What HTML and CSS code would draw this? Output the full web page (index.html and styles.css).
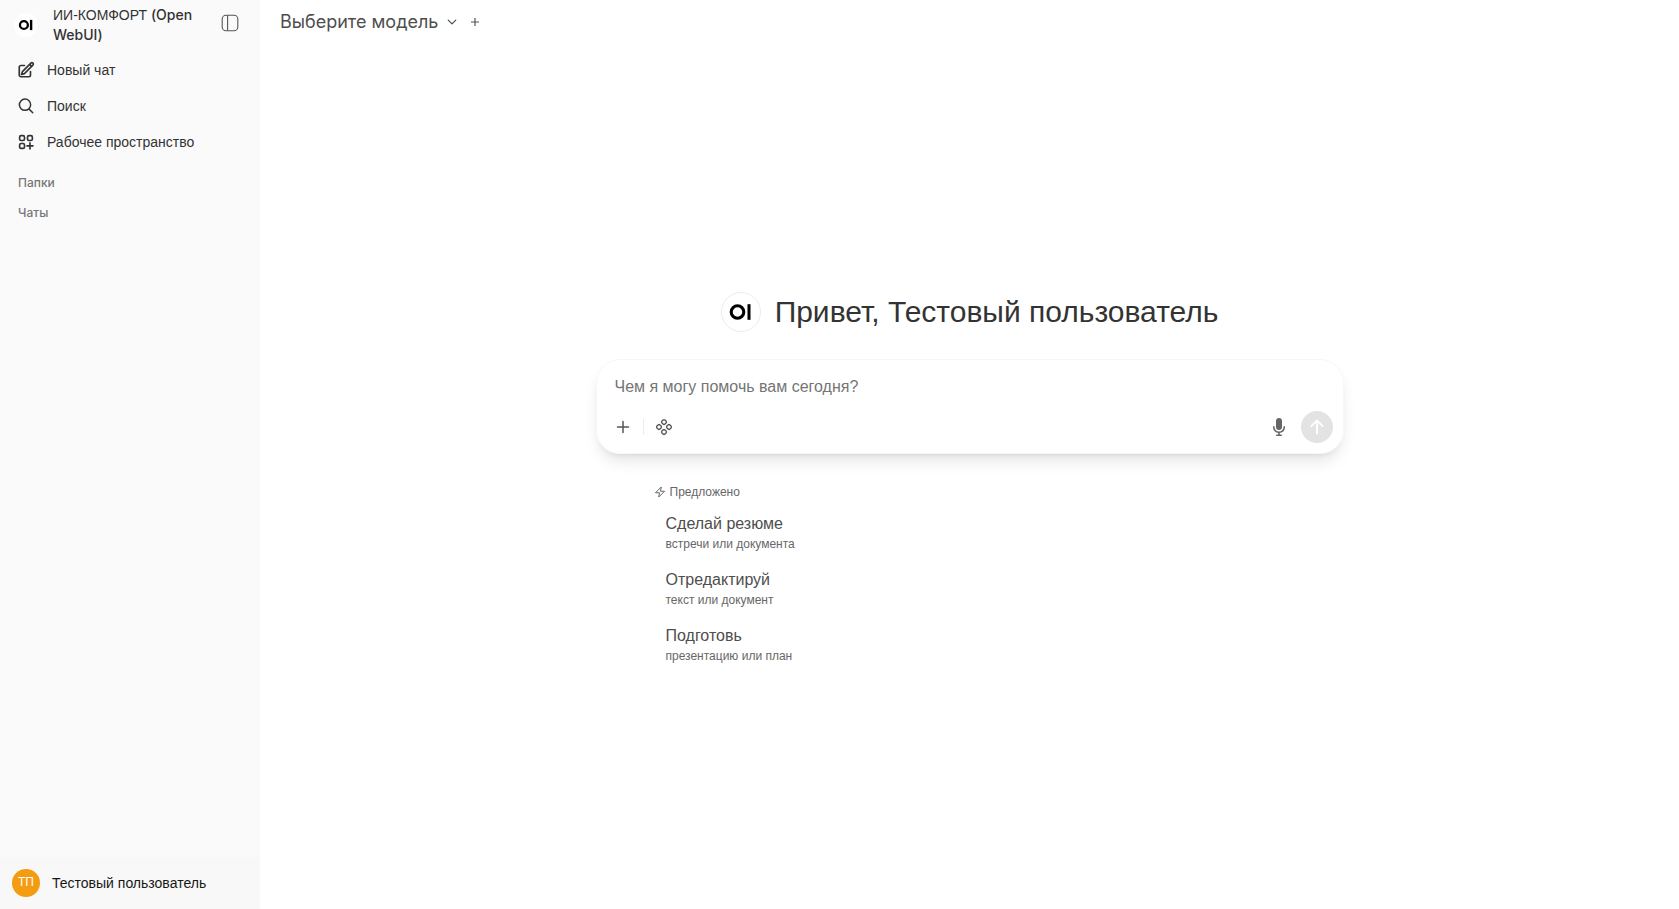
FILE: index.html
```
<!DOCTYPE html>
<html lang="ru">
	<head>
		<meta charset="utf-8">
		<title>ИИ-КОМФОРТ (Open WebUI)</title>
		<link rel="stylesheet" href="styles.css">
	</head>
	<body>
		<nav class="sidebar">
			<div class="sidebar-top">
				<svg class="brand-logo" viewBox="0 0 40 40">
					<circle cx="20" cy="20" r="20" fill="#fff"/>
					<circle cx="16.5" cy="20" r="6.6" fill="none" stroke="#000" stroke-width="3.8"/>
					<rect x="26.5" y="11.500" width="4" height="17" fill="#000"/>
				</svg>
				<div class="brand-name">ИИ-КОМФОРТ <span class="latin">(Open</span> <span class="latin">WebUI)</span></div>
				<button class="icon-btn toggle" aria-label="Боковая панель">
					<svg width="18" height="18" viewBox="0 0 18 18" fill="none" stroke="currentColor" stroke-width="1.1">
						<rect x="1.2" y="1.2" width="15.6" height="15.6" rx="3.8"/>
						<path d="M6.6 1.2v15.6"/>
					</svg>
				</button>
			</div>

			<a class="menu-item" href="#">
				<svg width="18" height="18" viewBox="0 0 24 24" fill="none" stroke="currentColor" stroke-width="2.2" stroke-linecap="round" stroke-linejoin="round">
					<path d="m16.862 4.487 1.687-1.688a1.875 1.875 0 1 1 2.652 2.652L10.582 16.07a4.5 4.5 0 0 1-1.897 1.13L6 18l.8-2.685a4.5 4.5 0 0 1 1.13-1.897l8.932-8.931Zm0 0L19.5 7.125M18 14v4.75A2.25 2.25 0 0 1 15.75 21H5.25A2.25 2.25 0 0 1 3 18.75V8.25A2.25 2.25 0 0 1 5.25 6H10"/>
				</svg>
				Новый чат
			</a>
			<a class="menu-item" href="#">
				<svg width="18" height="18" viewBox="0 0 24 24" fill="none" stroke="currentColor" stroke-width="2" stroke-linecap="round">
					<path d="m21 21-5.2-5.200m0 0A7.500 7.500 0 1 0 5.200 5.200a7.500 7.500 0 0 0 10.600 10.600Z"/>
				</svg>
				Поиск
			</a>
			<a class="menu-item" href="#">
				<svg width="18" height="18" viewBox="0 0 24 24" fill="none" stroke="currentColor" stroke-width="2.2" stroke-linecap="round">
					<rect x="3.5" y="3.5" width="6.5" height="6.5" rx="2"/>
					<rect x="14" y="3.5" width="6.5" height="6.5" rx="2"/>
					<rect x="3.5" y="14" width="6.5" height="6.5" rx="2"/>
					<path d="M17.3 13.2v8M13.3 17.2h8"/>
				</svg>
				Рабочее пространство
			</a>

			<div class="section-title first">Папки</div>
			<div class="section-title">Чаты</div>

			<button class="user">
				<span class="avatar">ТП</span>
				Тестовый пользователь
			</button>
		</nav>

		<main class="content">
			<header class="topbar">
				<button class="model">
					Выберите модель
					<svg width="12" height="12" viewBox="0 0 24 24" fill="none" stroke="currentColor" stroke-width="2.5" stroke-linecap="round" stroke-linejoin="round">
						<path d="m19.5 8.25-7.5 7.5-7.5-7.5"/>
					</svg>
				</button>
				<button class="icon-btn" aria-label="Добавить модель">
					<svg width="10" height="10" viewBox="0 0 10 10" fill="none" stroke="currentColor" stroke-width="1.2">
						<path d="M5 1v8M1 5h8"/>
					</svg>
				</button>
			</header>

			<div class="chat">
				<div class="greeting">
					<svg class="greeting-logo" viewBox="0 0 40 40">
						<circle cx="20" cy="20" r="19.5" fill="#fff" stroke="#ececec"/>
						<circle cx="16.5" cy="20" r="6.3" fill="none" stroke="#000" stroke-width="3.1"/>
						<rect x="26.5" y="12.2" width="3" height="15.6" fill="#000"/>
					</svg>
					<h1>Привет, Тестовый пользователь</h1>
				</div>

				<form class="composer">
					<input class="prompt" type="text" placeholder="Чем я могу помочь вам сегодня?" aria-label="Чем я могу помочь вам сегодня?">
					<div class="tools">
						<button class="icon-btn" type="button" aria-label="Ещё">
							<svg width="20" height="20" viewBox="0 0 20 20" fill="none" stroke="currentColor" stroke-width="1.5" stroke-linecap="round">
								<path d="M10 4.5v11M4.5 10h11"/>
							</svg>
						</button>
						<span class="divider"></span>
						<button class="icon-btn" type="button" aria-label="Интеграции">
							<svg width="18" height="18" viewBox="0 0 18 18" fill="none" stroke="currentColor" stroke-width="1.3">
								<rect x="6.9" y="1.9" width="4.2" height="4.2" rx="1.3" transform="rotate(45 9 4)"/>
								<rect x="1.9" y="6.9" width="4.2" height="4.2" rx="1.3" transform="rotate(45 4 9)"/>
								<rect x="11.9" y="6.9" width="4.2" height="4.2" rx="1.3" transform="rotate(45 14 9)"/>
								<rect x="6.9" y="11.9" width="4.2" height="4.2" rx="1.3" transform="rotate(45 9 14)"/>
							</svg>
						</button>
						<button class="icon-btn mic" type="button" aria-label="Диктовка">
							<svg width="20" height="20" viewBox="0 0 20 20" fill="currentColor">
								<path d="M7 4a3 3 0 0 1 6 0v6a3 3 0 1 1-6 0V4Z"/>
								<path d="M5.5 9.643a.75.75 0 0 0-1.5 0V10c0 3.06 2.29 5.585 5.25 5.954V17.5h-1.5a.75.75 0 0 0 0 1.5h4.5a.75.75 0 0 0 0-1.5h-1.5v-1.546A6.001 6.001 0 0 0 16 10v-.357a.75.75 0 0 0-1.5 0V10a4.5 4.5 0 0 1-9 0v-.357Z"/>
							</svg>
						</button>
						<button class="send" type="button" aria-label="Отправить">
							<svg width="20" height="20" viewBox="0 0 16 16" fill="currentColor">
								<path d="M8 14a.75.75 0 0 1-.75-.75V4.56L4.03 7.78a.75.75 0 0 1-1.06-1.06l4.5-4.5a.75.75 0 0 1 1.06 0l4.5 4.5a.75.75 0 0 1-1.06 1.06L8.75 4.56v8.69A.75.75 0 0 1 8 14Z"/>
							</svg>
						</button>
					</div>
				</form>

				<div class="suggestions">
					<div class="suggestions-title">
						<svg width="12" height="12" viewBox="0 0 24 24" fill="none" stroke="currentColor" stroke-width="2" stroke-linejoin="round">
							<path d="M14.5 2 3 13.5h8L9.5 22 21 10.5h-8L14.5 2Z"/>
						</svg>
						Предложено
					</div>
					<button class="suggestion"><span>Сделай резюме</span><small>встречи или документа</small></button>
					<button class="suggestion"><span>Отредактируй</span><small>текст или документ</small></button>
					<button class="suggestion"><span>Подготовь</span><small>презентацию или план</small></button>
				</div>
			</div>
		</main>
	</body>
</html>
```
FILE: styles.css
```
* {
	box-sizing: border-box;
}

body {
	margin: 0;
	display: flex;
	min-height: 100vh;
	background-color: #fff;
	color: #333;
	font-family: "Liberation Sans", Arial, sans-serif;
	font-size: 14px;
	line-height: 20px;
}

button {
	padding: 0;
	border: none;
	background: none;
	color: inherit;
	font: inherit;
	text-align: left;
	cursor: pointer;
}

svg {
	display: block;
	flex-shrink: 0;
}

.sidebar {
	display: flex;
	flex-direction: column;
	flex-shrink: 0;
	width: 260px;
	background-color: #fafafa;
}

.sidebar-top {
	display: flex;
	align-items: center;
	padding: 5px 21px 7px 14px;
}

.brand-logo {
	width: 24px;
	height: 24px;
}

.brand-name {
	flex: 1;
	margin-left: 15px;
	padding-right: 20px;
}

.latin {
	font-family: Inter, sans-serif;
	font-weight: 500;
}

.icon-btn {
	display: flex;
	color: #555;
}

.toggle {
	margin-bottom: 4px;
}

.menu-item {
	display: flex;
	align-items: center;
	gap: 12px;
	height: 36px;
	padding-left: 17px;
	color: #333;
	text-decoration: none;
}

.section-title {
	height: 30px;
	padding-left: 18px;
	color: #777;
	font-family: Inter, sans-serif;
	font-size: 12px;
	font-weight: 500;
	line-height: 30px;
}

.section-title.first {
	margin-top: 8px;
}

.user {
	display: flex;
	align-items: center;
	gap: 12px;
	margin-top: auto;
	padding: 12px;
	background-color: #f8f8f8;
	color: #171717;
}

.avatar {
	width: 28px;
	height: 28px;
	border-radius: 50%;
	background-color: #f39c12;
	color: #fff;
	font-size: 12px;
	line-height: 27px;
	text-align: center;
}

.content {
	flex: 1;
	display: flex;
	flex-direction: column;
}

.topbar {
	display: flex;
	align-items: center;
	gap: 12px;
	height: 44px;
	padding-left: 20px;
}

.model {
	display: flex;
	align-items: center;
	gap: 8px;
	color: #4e4e4e;
	font-family: Inter, sans-serif;
	font-size: 18px;
	line-height: 28px;
}

.chat {
	flex: 1;
	display: flex;
	flex-direction: column;
	justify-content: center;
	width: 100%;
	max-width: 768px;
	margin: 0 auto;
	padding: 10px 10px 0;
}

.greeting {
	display: flex;
	align-items: center;
	justify-content: center;
	gap: 14px;
	margin-bottom: 27px;
}

.greeting-logo {
	width: 40px;
	height: 40px;
}

h1 {
	margin: 0;
	font-size: 30px;
	font-weight: 400;
	line-height: 36px;
}

.composer {
	padding: 15px 10px 10px;
	border: 1px solid #f7f7f7;
	border-radius: 24px;
	box-shadow: 0 10px 15px -3px rgba(0, 0, 0, 0.1), 0 4px 6px -4px rgba(0, 0, 0, 0.1);
}

.prompt {
	display: block;
	width: 100%;
	height: 24px;
	padding: 0 8px;
	border: none;
	outline: none;
	background: none;
	font: inherit;
	font-size: 16px;
}

.prompt::placeholder {
	color: #757575;
	opacity: 1;
}

.tools {
	display: flex;
	align-items: center;
	margin-top: 12px;
	padding-left: 6px;
}

.divider {
	width: 1px;
	height: 16px;
	margin: 0 11px 0 10px;
	background-color: #ececec;
}

.mic {
	margin-left: auto;
	margin-right: 12px;
	color: #666;
}

.send {
	display: flex;
	align-items: center;
	justify-content: center;
	width: 32px;
	height: 32px;
	border-radius: 50%;
	background-color: #e3e3e3;
	color: #fff;
}

.suggestions {
	margin-top: 28px;
	padding-left: 58px;
}

.suggestions-title {
	display: flex;
	align-items: center;
	gap: 4px;
	margin-bottom: 2px;
	color: #676767;
	font-size: 12px;
}

.suggestion {
	display: block;
	width: 100%;
	height: 56px;
	padding: 0 12px;
}

.suggestion span {
	display: block;
	color: #4e4e4e;
	font-size: 16px;
	line-height: 24px;
}

.suggestion small {
	display: block;
	color: #676767;
	font-size: 12px;
	line-height: 16px;
}
```
